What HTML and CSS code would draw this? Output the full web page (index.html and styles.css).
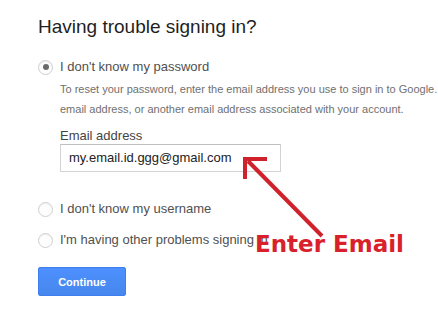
FILE: index.html
```html
<!DOCTYPE html>
<html lang="en">
<head>
<meta charset="utf-8">
<title>Having trouble signing in?</title>
<link rel="stylesheet" href="styles.css">
</head>
<body>
<main class="page">
  <h1 class="title">Having trouble signing in?</h1>

  <label class="option option-first">
    <span class="radio radio-checked"></span>
    <span class="option-label">I don't know my password</span>
  </label>

  <div class="details">
    <p class="desc">To reset your password, enter the email address you use to sign in to Google.<br>email address, or another email address associated with your account.</p>
    <div class="field-label">Email address</div>
    <div class="input">my.email.id.ggg@gmail.com</div>
  </div>

  <label class="option option-second">
    <span class="radio"></span>
    <span class="option-label">I don't know my username</span>
  </label>

  <label class="option option-third">
    <span class="radio"></span>
    <span class="option-label">I'm having other problems signing in</span>
  </label>

  <button class="btn" type="button">Continue</button>
</main>

<svg class="arrow" width="438" height="311" viewBox="0 0 438 311" aria-hidden="true">
  <line x1="322" y1="236" x2="248" y2="161" stroke="#d0222c" stroke-width="4" stroke-linecap="butt"/>
  <polyline points="267,159 245,159 245,179" fill="none" stroke="#d0222c" stroke-width="4" stroke-linejoin="miter"/>
</svg>
<div class="annotation">Enter Email</div>
</body>
</html>
```
FILE: styles.css
```css
html, body {
  margin: 0;
  padding: 0;
  overflow: hidden;
  background: #fff;
}
body {
  width: 438px;
  height: 311px;
  position: relative;
  font-family: Arial, "Liberation Sans", sans-serif;
}
.page {
  display: flex;
  flex-direction: column;
  align-items: flex-start;
  padding: 16px 0 0 38px;
}
.title {
  margin: 0;
  font-size: 19px;
  line-height: 22px;
  font-weight: normal;
  color: #1f1f1f;
  white-space: nowrap;
}
.option {
  display: flex;
  align-items: center;
  gap: 7px;
  height: 16px;
}
.option-first { margin-top: 21px; }
.option-second { margin-top: 29px; }
.option-third { margin-top: 15px; }
.radio {
  box-sizing: border-box;
  width: 15px;
  height: 15px;
  border-radius: 50%;
  border: 1px solid #cfcfcf;
  background: #fdfdfd;
  box-shadow: inset 0 1px 1px rgba(0,0,0,0.06);
  display: flex;
  align-items: center;
  justify-content: center;
  flex: none;
}
.radio-checked::after {
  content: "";
  width: 6px;
  height: 6px;
  border-radius: 50%;
  background: #6a6a6a;
}
.option-label {
  font-size: 13px;
  line-height: 16px;
  color: #505050;
  white-space: nowrap;
}
.details {
  margin-top: 4px;
  padding-left: 22px;
  display: flex;
  flex-direction: column;
  align-items: flex-start;
}
.desc {
  margin: 0;
  font-size: 11px;
  line-height: 20px;
  color: #707070;
  white-space: nowrap;
}
.field-label {
  margin-top: 9px;
  font-size: 13px;
  line-height: 16px;
  color: #444;
}
.input {
  box-sizing: border-box;
  width: 221px;
  height: 28px;
  border: 1px solid #d3d3d3;
  border-top-color: #c0c0c0;
  padding: 0 8px;
  font-size: 13px;
  line-height: 26px;
  color: #222;
  background: #fff;
}
.btn {
  margin-top: 19px;
  box-sizing: border-box;
  width: 88px;
  height: 29px;
  border: 1px solid #3d7ff0;
  border-radius: 2px;
  background: linear-gradient(#4d90fe, #4787ed);
  color: #fff;
  font-family: Arial, "Liberation Sans", sans-serif;
  font-size: 11px;
  font-weight: bold;
  padding: 0;
}
.arrow {
  position: absolute;
  left: 0;
  top: 0;
  pointer-events: none;
}
.annotation {
  position: absolute;
  left: 255px;
  top: 233px;
  font-family: "DejaVu Sans", sans-serif;
  font-weight: bold;
  font-size: 23px;
  line-height: 23px;
  color: #d8212b;
  white-space: nowrap;
}
```
